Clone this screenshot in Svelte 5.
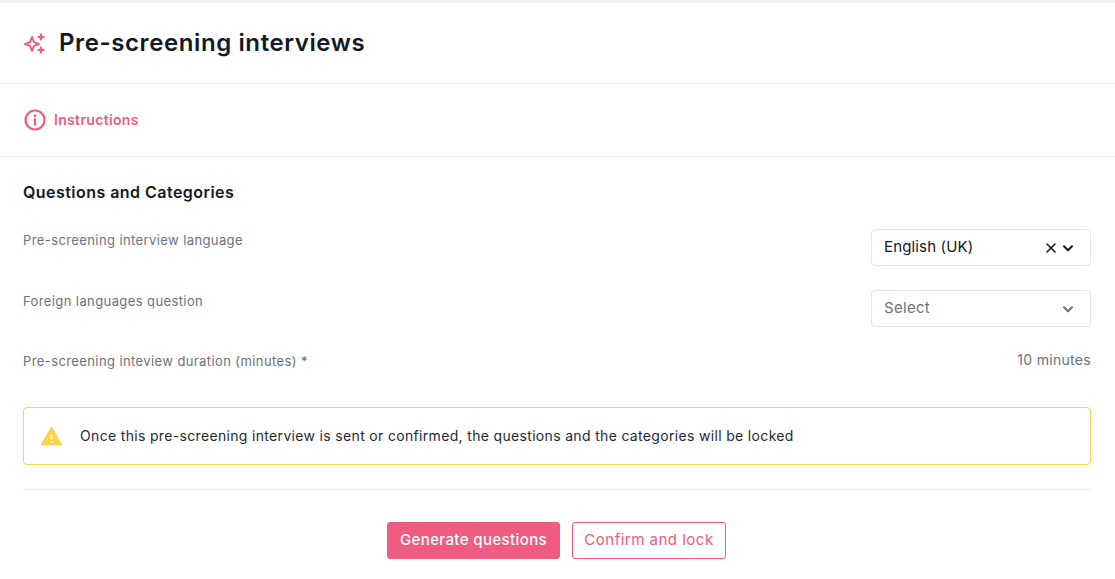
<script>
  let language = "English (UK)";
</script>

<div class="page">
  <header class="head">
    <svg class="sparkle" width="24" height="24" viewBox="0 0 24 24" fill="none" stroke="#ef5b81" stroke-width="1.9" stroke-linejoin="round">
      <path d="M9 6 L10.9 11.1 L16 13 L10.9 14.9 L9 20 L7.1 14.9 L2 13 L7.1 11.1 Z" />
      <path d="M18 2.5 L18.9 5.1 L21.5 6 L18.9 6.9 L18 9.5 L17.1 6.9 L14.5 6 L17.1 5.1 Z" fill="#ef5b81" stroke-width="1" />
      <path d="M18 15.5 L18.9 18.1 L21.5 19 L18.9 19.9 L18 22.5 L17.1 19.9 L14.5 19 L17.1 18.1 Z" fill="#ef5b81" stroke-width="1" />
    </svg>
    <h1>Pre-screening interviews</h1>
  </header>

  <div class="instructions">
    <svg width="24" height="24" viewBox="0 0 24 24" fill="none" stroke="#ef5b81" stroke-width="2.2" stroke-linecap="round">
      <circle cx="12" cy="12" r="9.5" />
      <path d="M12 11.5v5" stroke-width="2.4" />
      <circle cx="12" cy="7.8" r="1.4" fill="#ef5b81" stroke="none" />
    </svg>
    <span>Instructions</span>
  </div>

  <section class="body">
    <h2>Questions and Categories</h2>

    <div class="row first">
      <span class="label">Pre-screening interview language</span>
      <div class="select">
        <span class="value">{language}</span>
        <svg class="clear" width="12" height="12" viewBox="0 0 12 12" stroke="#111827" stroke-width="1.6" stroke-linecap="round">
          <path d="M2 2l8 8M10 2l-8 8" />
        </svg>
        <svg width="14" height="14" viewBox="0 0 14 14" fill="none" stroke="#111827" stroke-width="2" stroke-linecap="round" stroke-linejoin="round">
          <path d="M3 5.2l4 4 4-4" />
        </svg>
      </div>
    </div>

    <div class="row second">
      <span class="label">Foreign languages question</span>
      <div class="select">
        <span class="value placeholder">Select</span>
        <svg width="14" height="14" viewBox="0 0 14 14" fill="none" stroke="#6b7280" stroke-width="2" stroke-linecap="round" stroke-linejoin="round">
          <path d="M3 5.2l4 4 4-4" />
        </svg>
      </div>
    </div>

    <div class="row third">
      <span class="label">Pre-screening inteview duration (minutes) *</span>
      <span class="minutes">10 minutes</span>
    </div>

    <div class="alert">
      <svg width="23" height="20" viewBox="0 0 23 20">
        <path d="M11.5 1 L22 19 H1 Z" fill="#fcd34d" stroke="#fcd34d" stroke-width="1" stroke-linejoin="round" />
        <rect x="10.7" y="8" width="1.7" height="5.5" rx="0.8" fill="#fff" />
        <circle cx="11.5" cy="16" r="1" fill="#fff" />
      </svg>
      <p>Once this pre-screening interview is sent or confirmed, the questions and the categories will be locked</p>
    </div>

    <hr />

    <div class="actions">
      <button class="primary"><span>Generate questions</span></button>
      <button class="outline"><span>Confirm and lock</span></button>
    </div>
  </section>
</div>

<style>
  :global(body) {
    margin: 0;
    background: #fff;
    overflow: hidden;
  }
  .page {
    font-family: "Inter", "Liberation Sans", sans-serif;
    border-top: 3px solid #f0f1f4;
    color: #111827;
    height: 576px;
  }
  .head {
    display: flex;
    align-items: center;
    gap: 12px;
    height: 80px;
    padding: 0 23px;
    border-bottom: 1px solid #eceef1;
  }
  h1 {
    margin: -2px 0 0;
    font-size: 24px;
    font-weight: 600;
    letter-spacing: 0.6px;
  }
  .instructions {
    display: flex;
    align-items: center;
    gap: 7px;
    height: 72px;
    padding: 0 23px;
    border-bottom: 1px solid #eceef1;
    color: #ef5b81;
    font-size: 14px;
    font-weight: 600;
    letter-spacing: 0.33px;
  }
  .instructions span {
    margin-top: -2px;
  }
  .body {
    padding: 0 24px 0 23px;
  }
  h2 {
    margin: 0;
    padding-top: 24px;
    font-size: 16px;
    line-height: 22px;
    font-weight: 600;
    letter-spacing: 0.46px;
  }
  .row {
    display: flex;
    justify-content: space-between;
    align-items: center;
  }
  .row.first {
    margin-top: 26px;
  }
  .row.second {
    margin-top: 24px;
  }
  .row.third {
    margin-top: 24px;
    height: 20px;
  }
  .label {
    font-size: 13px;
    letter-spacing: 0.4px;
    color: #6b7280;
    margin-bottom: 16px;
  }
  .third .label {
    margin-bottom: 0;
  }
  .select {
    display: flex;
    align-items: center;
    width: 220px;
    height: 37px;
    box-sizing: border-box;
    padding: 0 15px 0 12px;
    border: 1px solid #e2e4ea;
    border-radius: 4px;
    font-size: 15px;
    letter-spacing: 0.15px;
  }
  .value {
    flex: 1;
    margin-top: -2px;
  }
  .placeholder {
    color: #6b7280;
    letter-spacing: 0.3px;
  }
  .clear {
    margin-right: 4px;
  }
  .minutes {
    font-size: 14px;
    letter-spacing: 0.3px;
    color: #6b7280;
    margin-bottom: 4px;
  }
  .alert {
    display: flex;
    align-items: center;
    gap: 17px;
    height: 58px;
    box-sizing: border-box;
    margin-top: 36px;
    padding: 0 16px;
    border: 1px solid #fcd34d;
    border-radius: 4px;
  }
  .alert p {
    margin: -2px 0 0;
    font-size: 14px;
    letter-spacing: 0.33px;
    color: #1f2937;
  }
  hr {
    margin: 24px 0 0;
    border: 0;
    border-top: 1px solid #eceef1;
  }
  .actions {
    display: flex;
    justify-content: center;
    gap: 12px;
    margin-top: 32px;
    padding-right: 1px;
  }
  button {
    height: 37px;
    box-sizing: border-box;
    padding: 0 8px 2px;
    border-radius: 3px;
    font: 500 15px "Inter", "Liberation Sans", sans-serif;
  }
  .primary {
    width: 173px;
    background: #ef5b81;
    border: 1px solid #ef5b81;
    color: #fff;
    letter-spacing: 0.39px;
  }
  .outline {
    width: 154px;
    background: #fff;
    border: 1px solid #ef5b81;
    color: #ef5b81;
    font-weight: 400;
    letter-spacing: 0.5px;
  }
</style>
